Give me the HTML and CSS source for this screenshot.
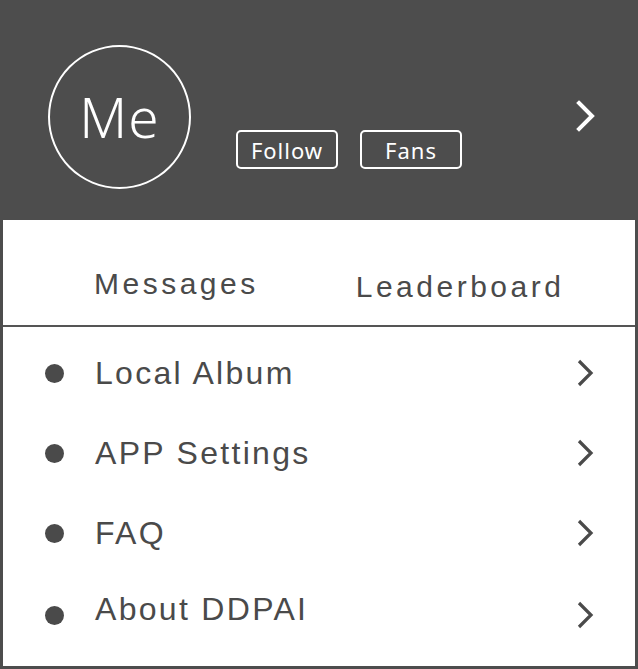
FILE: index.html
```html
<!DOCTYPE html>
<html>
<head>
<meta charset="utf-8">
<link rel="stylesheet" href="styles.css">
</head>
<body>
<div class="page">
  <header class="header">
    <div class="avatar"><span class="avatar-text">Me</span></div>
    <div class="buttons">
      <span class="pill">Follow</span>
      <span class="pill">Fans</span>
    </div>
    <svg class="head-chev" width="22" height="32" viewBox="0 0 22 32"><polyline points="4,3 17,16 4,29" fill="none" stroke="#fff" stroke-width="4" stroke-linecap="square" stroke-linejoin="miter"/></svg>
  </header>
  <main class="panel">
    <div class="tabs">
      <div class="tab">Messages</div>
      <div class="tab tab-low">Leaderboard</div>
    </div>
    <ul class="list">
      <li class="row"><span class="dot"></span><span class="label">Local Album</span><svg class="chev" width="20" height="30" viewBox="0 0 20 30"><polyline points="4,3 16,15 4,27" fill="none" stroke="#4a4a4a" stroke-width="3.2"/></svg></li>
      <li class="row"><span class="dot"></span><span class="label">APP Settings</span><svg class="chev" width="20" height="30" viewBox="0 0 20 30"><polyline points="4,3 16,15 4,27" fill="none" stroke="#4a4a4a" stroke-width="3.2"/></svg></li>
      <li class="row"><span class="dot"></span><span class="label">FAQ</span><svg class="chev" width="20" height="30" viewBox="0 0 20 30"><polyline points="4,3 16,15 4,27" fill="none" stroke="#4a4a4a" stroke-width="3.2"/></svg></li>
      <li class="row row-last"><span class="dot"></span><span class="label label-up">About DDPAI</span><svg class="chev" width="20" height="30" viewBox="0 0 20 30"><polyline points="4,3 16,15 4,27" fill="none" stroke="#4a4a4a" stroke-width="3.2"/></svg></li>
    </ul>
  </main>
</div>
</body>
</html>
```
FILE: styles.css
```css
* { box-sizing: border-box; }
html, body { margin: 0; padding: 0; }
body { background: #4d4d4d; width: 638px; height: 669px; overflow: hidden; }
.page { width: 638px; height: 669px; display: flex; flex-direction: column; background: #4d4d4d; }

.header {
  height: 220px;
  display: flex;
  align-items: flex-start;
  padding: 45px 0 0 48px;
}
.avatar {
  width: 143px;
  height: 144px;
  border: 2px solid #fff;
  border-radius: 50%;
  display: flex;
  align-items: center;
  justify-content: center;
  flex-shrink: 0;
}
.avatar-text {
  font-family: "Noto Sans", "Open Sans", sans-serif;
  font-weight: 300;
  font-size: 55px;
  color: #fff;
  line-height: 1;
  letter-spacing: 1px;
  margin-top: -2px;
}
.buttons {
  display: flex;
  gap: 22px;
  margin: 85px 0 0 45px;
}
.pill {
  width: 102px;
  height: 39px;
  border: 2px solid #fff;
  border-radius: 5px;
  color: #fff;
  font-family: "Noto Sans", "Open Sans", sans-serif;
  font-size: 22px;
  letter-spacing: 1px;
  display: flex;
  align-items: center;
  justify-content: center;
  line-height: 1;
}
.head-chev { margin: 55px 41px 0 auto; display: block; }

.panel {
  flex: 1;
  background: #fff;
  margin: 0 3px 3px 3px;
  display: flex;
  flex-direction: column;
}
.tabs {
  height: 107px;
  border-bottom: 2px solid #555;
  display: flex;
  align-items: flex-start;
  padding: 47px 0 0 91px;
  gap: 97px;
}
.tab {
  font-family: "Liberation Sans", Arial, sans-serif;
  font-size: 30px;
  line-height: 34px;
  letter-spacing: 3.5px;
  color: #4a4a4a;
}
.tab-low { margin-top: 3px; }

.list { list-style: none; margin: 0; padding: 6px 0 0 0; }
.row {
  height: 80px;
  display: flex;
  align-items: center;
  padding: 0 40px 0 42px;
}
.dot {
  width: 19px;
  height: 19px;
  border-radius: 50%;
  background: #4a4a4a;
  flex-shrink: 0;
}
.label {
  font-family: "Liberation Sans", Arial, sans-serif;
  font-size: 32px;
  line-height: 36px;
  letter-spacing: 2.3px;
  color: #4a4a4a;
  margin-left: 31px;
}
.row-last { margin-top: 2px; }
.label-up { margin-bottom: 12px; }
.chev { margin-left: auto; display: block; }
```
